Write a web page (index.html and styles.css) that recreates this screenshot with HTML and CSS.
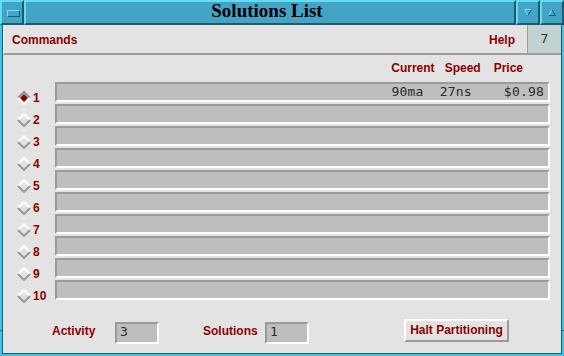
FILE: index.html
```html
<!DOCTYPE html>
<html>
<head>
<meta charset="utf-8">
<link rel="stylesheet" href="styles.css">
</head>
<body>
<div class="window">
  <div class="titlebar">
    <div class="tb-btn tb-menu"><span class="menu-icon"></span></div>
    <div class="tb-title">Solutions List</div>
    <div class="tb-btn">
      <svg width="8" height="7" viewBox="0 0 8 7"><polyline points="0.5,0.5 7.5,0.5" stroke="#6ee4f6" stroke-width="1" fill="none"/><polyline points="0.5,0.5 4,6.5" stroke="#6ee4f6" stroke-width="1" fill="none"/><polyline points="7.5,0.5 4,6.5" stroke="#1d5a6c" stroke-width="1" fill="none"/></svg>
    </div>
    <div class="tb-btn">
      <svg width="8" height="7" viewBox="0 0 8 7"><polyline points="0.5,6.5 4,0.5" stroke="#6ee4f6" stroke-width="1" fill="none"/><polyline points="4,0.5 7.5,6.5 0.5,6.5" stroke="#1d5a6c" stroke-width="1" fill="none"/></svg>
    </div>
  </div>
  <div class="body">
    <div class="menubar">
      <span class="menu-item">Commands</span>
      <span class="menu-item help">Help</span>
      <span class="count">7</span>
    </div>
    <div class="headers">
      <span class="hdr">Current</span>
      <span class="hdr hdr-speed">Speed</span>
      <span class="hdr hdr-price">Price</span>
    </div>
    <div class="list">
      <div class="radios">
        <div class="radio"><svg class="dia" width="14" height="14" viewBox="0 0 14 14"><polygon points="7,3 11,7 7,11 3,7" fill="#8b0000"/><polyline points="1,7 7,1 13,7" stroke="#8f8f8f" stroke-width="2" fill="none"/><polyline points="1,7 7,13 13,7" stroke="#ffffff" stroke-width="2" fill="none"/></svg><span class="rlabel">1</span></div>
        <div class="radio"><svg class="dia" width="14" height="14" viewBox="0 0 14 14"><polyline points="1,7 7,1 13,7" stroke="#ffffff" stroke-width="2" fill="none"/><polyline points="1,7 7,13 13,7" stroke="#9a9a9a" stroke-width="2" fill="none"/></svg><span class="rlabel">2</span></div>
        <div class="radio"><svg class="dia" width="14" height="14" viewBox="0 0 14 14"><polyline points="1,7 7,1 13,7" stroke="#ffffff" stroke-width="2" fill="none"/><polyline points="1,7 7,13 13,7" stroke="#9a9a9a" stroke-width="2" fill="none"/></svg><span class="rlabel">3</span></div>
        <div class="radio"><svg class="dia" width="14" height="14" viewBox="0 0 14 14"><polyline points="1,7 7,1 13,7" stroke="#ffffff" stroke-width="2" fill="none"/><polyline points="1,7 7,13 13,7" stroke="#9a9a9a" stroke-width="2" fill="none"/></svg><span class="rlabel">4</span></div>
        <div class="radio"><svg class="dia" width="14" height="14" viewBox="0 0 14 14"><polyline points="1,7 7,1 13,7" stroke="#ffffff" stroke-width="2" fill="none"/><polyline points="1,7 7,13 13,7" stroke="#9a9a9a" stroke-width="2" fill="none"/></svg><span class="rlabel">5</span></div>
        <div class="radio"><svg class="dia" width="14" height="14" viewBox="0 0 14 14"><polyline points="1,7 7,1 13,7" stroke="#ffffff" stroke-width="2" fill="none"/><polyline points="1,7 7,13 13,7" stroke="#9a9a9a" stroke-width="2" fill="none"/></svg><span class="rlabel">6</span></div>
        <div class="radio"><svg class="dia" width="14" height="14" viewBox="0 0 14 14"><polyline points="1,7 7,1 13,7" stroke="#ffffff" stroke-width="2" fill="none"/><polyline points="1,7 7,13 13,7" stroke="#9a9a9a" stroke-width="2" fill="none"/></svg><span class="rlabel">7</span></div>
        <div class="radio"><svg class="dia" width="14" height="14" viewBox="0 0 14 14"><polyline points="1,7 7,1 13,7" stroke="#ffffff" stroke-width="2" fill="none"/><polyline points="1,7 7,13 13,7" stroke="#9a9a9a" stroke-width="2" fill="none"/></svg><span class="rlabel">8</span></div>
        <div class="radio"><svg class="dia" width="14" height="14" viewBox="0 0 14 14"><polyline points="1,7 7,1 13,7" stroke="#ffffff" stroke-width="2" fill="none"/><polyline points="1,7 7,13 13,7" stroke="#9a9a9a" stroke-width="2" fill="none"/></svg><span class="rlabel">9</span></div>
        <div class="radio"><svg class="dia" width="14" height="14" viewBox="0 0 14 14"><polyline points="1,7 7,1 13,7" stroke="#ffffff" stroke-width="2" fill="none"/><polyline points="1,7 7,13 13,7" stroke="#9a9a9a" stroke-width="2" fill="none"/></svg><span class="rlabel">10</span></div>
      </div>
      <div class="rows">
        <div class="row">90ma  27ns    $0.98</div>
        <div class="row"></div>
        <div class="row"></div>
        <div class="row"></div>
        <div class="row"></div>
        <div class="row"></div>
        <div class="row"></div>
        <div class="row"></div>
        <div class="row"></div>
        <div class="row"></div>
      </div>
    </div>
    <div class="footer">
      <span class="flabel flabel-act">Activity</span>
      <span class="fbox">3</span>
      <span class="flabel flabel-sol">Solutions</span>
      <span class="fbox">1</span>
      <span class="button">Halt Partitioning</span>
    </div>
  </div>
  <span class="tick tick-l"></span>
  <span class="tick tick-r"></span>
</div>
</body>
</html>
```

FILE: styles.css
```css
html, body {
  margin: 0;
  padding: 0;
  background: #e3e3e3;
}

.window {
  position: relative;
  width: 564px;
  height: 356px;
  box-sizing: border-box;
  background: #3ec4e4;
  display: flex;
  flex-direction: column;
  font-family: "Liberation Sans", Arial, sans-serif;
  font-weight: bold;
  font-size: 12px;
}

.titlebar {
  display: flex;
  height: 25px;
  flex: none;
}

.tb-btn, .tb-title {
  box-sizing: border-box;
  height: 25px;
  border: 2px solid;
  border-color: #62dcf2 #1d5a6c #1d5a6c #62dcf2;
  background: #43a4c6;
}

.tb-btn {
  width: 24px;
  display: flex;
  align-items: center;
  justify-content: center;
}

.tb-menu {
  width: 24px;
}

.tb-btn svg {
  display: block;
  margin-top: -1px;
}

.menu-icon {
  display: block;
  width: 13px;
  height: 7px;
  box-sizing: border-box;
  border: 1px solid;
  border-color: #6ee4f6 #1d5a6c #1d5a6c #6ee4f6;
  margin-left: 2px;
  margin-top: 1px;
}

.tb-title {
  flex: 1;
  text-align: center;
  font-family: "Liberation Serif", "Times New Roman", serif;
  font-weight: bold;
  font-size: 19px;
  line-height: 17px;
  color: #000;
  padding-right: 6px;
}

.body {
  flex: 1;
  margin: 0 2px 2px 2px;
  border: 1px solid #1d5a6c;
  border-top: none;
  background: #e3e3e3;
  display: flex;
  flex-direction: column;
  color: #8b0000;
}

.menubar {
  display: flex;
  height: 30px;
  box-sizing: border-box;
  border-bottom: 2px solid #9c9c9c;
  border-left: 1px solid #ffffff;
  flex: none;
}

.menu-item {
  padding-top: 8px;
  line-height: 14px;
}

.menu-item:first-child {
  padding-left: 8px;
}

.help {
  margin-left: auto;
  margin-right: 12px;
}

.count {
  width: 34px;
  box-sizing: border-box;
  border-left: 1px solid #9c9c9c;
  background: #c2d2d2;
  text-align: center;
  font-family: "DejaVu Sans Mono", monospace;
  font-weight: normal;
  font-size: 13px;
  line-height: 14px;
  padding-top: 7px;
  color: #333;
}

.headers {
  display: flex;
  justify-content: flex-end;
  padding-top: 6px;
  padding-right: 38px;
  line-height: 14px;
  flex: none;
}

.hdr-speed {
  margin-left: 10px;
}

.hdr-price {
  margin-left: 13px;
}

.list {
  display: flex;
  margin-top: 7px;
  flex: none;
}

.radios {
  width: 52px;
  box-sizing: border-box;
  padding-left: 14px;
  padding-top: 5px;
}

.radio {
  display: flex;
  align-items: center;
  height: 22px;
}

.dia {
  display: block;
  flex: none;
}

.rlabel {
  margin-left: 2px;
  line-height: 22px;
}

.rows {
  flex: 1;
  margin-right: 11px;
}

.row {
  height: 20px;
  box-sizing: border-box;
  border: 2px solid;
  border-color: #9a9a9a #ffffff #ffffff #9a9a9a;
  background: #bebebe;
  margin-bottom: 2px;
  font-family: "DejaVu Sans Mono", monospace;
  font-weight: normal;
  font-size: 13px;
  letter-spacing: 0.2px;
  line-height: 16px;
  color: #2a2a2a;
  text-align: right;
  white-space: pre;
  padding-right: 4px;
}

.footer {
  display: flex;
  align-items: flex-start;
  margin-top: 12px;
  padding-left: 49px;
  flex: none;
}

.flabel {
  margin-top: 5px;
  line-height: 14px;
}

.flabel-act {
  width: 63px;
}

.flabel-sol {
  width: 62px;
  margin-left: 44px;
}

.fbox {
  margin-top: 3px;
  width: 44px;
  height: 22px;
  box-sizing: border-box;
  border: 2px solid;
  border-color: #9a9a9a #ffffff #ffffff #9a9a9a;
  background: #bebebe;
  font-family: "DejaVu Sans Mono", monospace;
  font-weight: normal;
  font-size: 13px;
  line-height: 14px;
  padding-top: 1px;
  padding-left: 3px;
  color: #2a2a2a;
}

.button {
  margin-left: 95px;
  width: 105px;
  height: 23px;
  box-sizing: border-box;
  border: 2px solid;
  border-color: #ffffff #9a9a9a #9a9a9a #ffffff;
  text-align: center;
  line-height: 19px;
  white-space: nowrap;
}

.tick {
  position: absolute;
  width: 3px;
  height: 1px;
  background: #1d5a6c;
  top: 330px;
}

.tick-l {
  left: 0;
}

.tick-r {
  right: 0;
}
```
